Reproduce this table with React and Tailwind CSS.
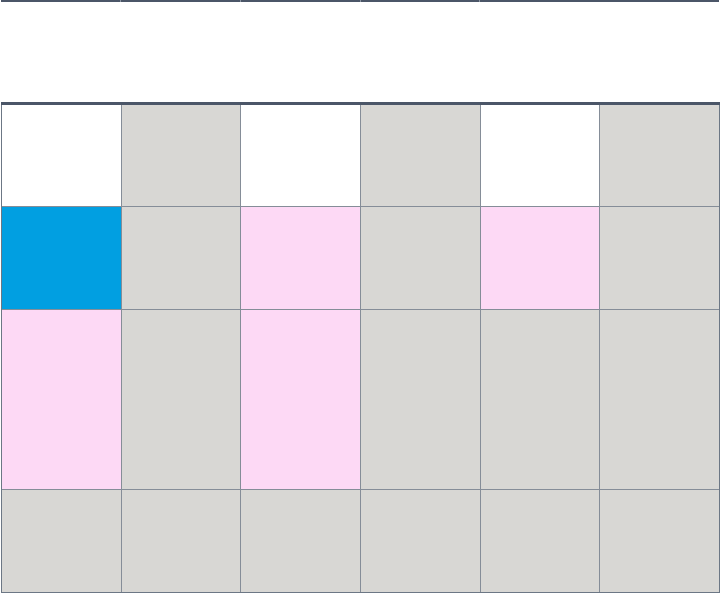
import React from 'react';

const rows = [
  { h: 'h-[101px]', cells: ['white', 'gray', 'white', 'gray', 'white', 'gray'] },
  { h: 'h-[102px]', cells: ['blue', 'gray', 'pink', 'gray', 'pink', 'gray'] },
  { h: 'h-[179px]', cells: ['pink', 'gray', 'pink', 'gray', 'gray', 'gray'] },
  { h: 'h-[102px]', cells: ['gray', 'gray', 'gray', 'gray', 'gray', 'gray'] },
];

const fills = {
  white: 'bg-white',
  gray: 'bg-[#d8d7d4]',
  pink: 'bg-[#fdd9f5]',
  blue: 'bg-[#019fe1]',
};

const App = () => {
  return (
    <div className="w-[721px] h-[594px] bg-white overflow-hidden">
      {/* header strip, last segment spans two columns */}
      <div className="ml-px mr-[2px] h-[2px] grid grid-cols-6 gap-px bg-[#8d96a3]">
        <div className="bg-[#4b5668]" />
        <div className="bg-[#4b5668]" />
        <div className="bg-[#4b5668]" />
        <div className="bg-[#4b5668]" />
        <div className="col-span-2 bg-[#4b5668]" />
      </div>
      <div className="h-[100px]" />
      <div className="ml-px mr-[1px] h-[3px] bg-[#4b5668]" />

      <div className="ml-px mr-[1px] border-x border-b border-[#6c7785] bg-[#858d98] flex flex-col gap-px">
        {rows.map((row, r) => (
          <div key={r} className={`grid grid-cols-6 gap-px ${row.h}`}>
            {row.cells.map((c, i) => (
              <div key={i} className={fills[c]} />
            ))}
          </div>
        ))}
      </div>
    </div>
  );
};

export default App;
